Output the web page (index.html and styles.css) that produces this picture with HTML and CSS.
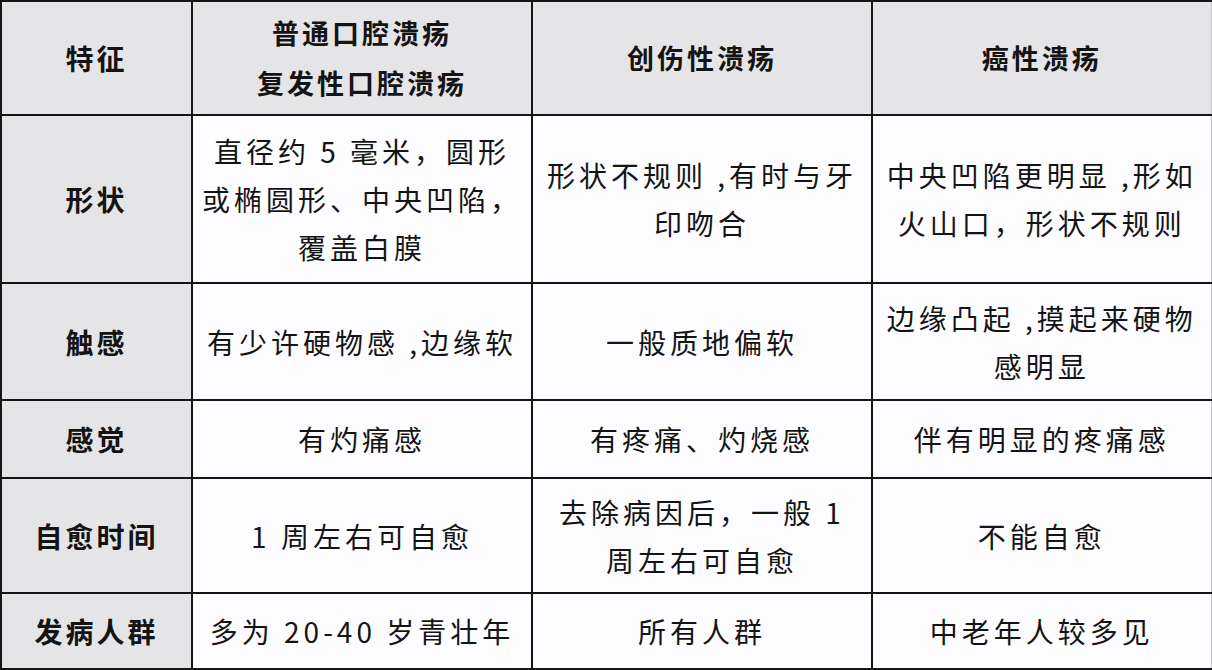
FILE: index.html
```html
<!DOCTYPE html>
<html lang="zh-CN">
<head>
<meta charset="utf-8">
<title>口腔溃疡对比</title>
<link rel="stylesheet" href="styles.css">
</head>
<body>
<table class="cmp">
  <colgroup>
    <col class="c0"><col class="c1"><col class="c2"><col class="c3">
  </colgroup>
  <tr class="r-head">
    <th class="key">特征</th>
    <th>普通口腔溃疡<br>复发性口腔溃疡</th>
    <th>创伤性溃疡</th>
    <th class="last">癌性溃疡</th>
  </tr>
  <tr class="r1">
    <th class="key">形状</th>
    <td>直径约 5 毫米，圆形<br>或椭圆形、中央凹陷，<br>覆盖白膜</td>
    <td>形状不规则 ,有时与牙<br>印吻合</td>
    <td class="last">中央凹陷更明显 ,形如<br>火山口，形状不规则</td>
  </tr>
  <tr class="r2">
    <th class="key">触感</th>
    <td>有少许硬物感 ,边缘软</td>
    <td>一般质地偏软</td>
    <td class="last">边缘凸起 ,摸起来硬物<br>感明显</td>
  </tr>
  <tr class="r3">
    <th class="key">感觉</th>
    <td>有灼痛感</td>
    <td>有疼痛、灼烧感</td>
    <td class="last">伴有明显的疼痛感</td>
  </tr>
  <tr class="r4">
    <th class="key">自愈时间</th>
    <td>1 周左右可自愈</td>
    <td>去除病因后，一般 1<br>周左右可自愈</td>
    <td class="last">不能自愈</td>
  </tr>
  <tr class="r5">
    <th class="key">发病人群</th>
    <td>多为 20-40 岁青壮年</td>
    <td>所有人群</td>
    <td class="last">中老年人较多见</td>
  </tr>
</table>
</body>
</html>
```

FILE: styles.css
```css
html, body {
  margin: 0;
  padding: 0;
  background: #ffffff;
}

body {
  width: 1212px;
  height: 670px;
  overflow: hidden;
  font-family: "Noto Sans CJK SC", "Noto Sans", sans-serif;
  color: #141414;
}

.cmp {
  width: 1210px;
  border-collapse: collapse;
  table-layout: fixed;
}

.c0 { width: 191px; }
.c1 { width: 340px; }
.c2 { width: 340px; }
.c3 { width: 339px; }

.cmp th,
.cmp td {
  border: 2px solid #151515;
  padding: 0 4px;
  text-align: center;
  vertical-align: middle;
  font-size: 28px;
  line-height: 48px;
}

.cmp th {
  font-weight: 700;
  font-size: 27px;
  letter-spacing: 3px;
  background: #e5e5e8;
}

.cmp th.key {
  font-size: 28px;
  letter-spacing: 3px;
  background: #e5e5e8;
}

.cmp td {
  font-weight: 400;
  letter-spacing: 4px;
  background: #fdfdff;
}

.cmp .last {
  border-right: 1px solid #c4c4c8;
}

.r-head th { line-height: 50px; }

.r-head { height: 114px; }
.r1 { height: 168px; }
.r2 { height: 117px; }
.r3 { height: 78px; }
.r4 { height: 115px; }
.r5 { height: 76px; }
```
